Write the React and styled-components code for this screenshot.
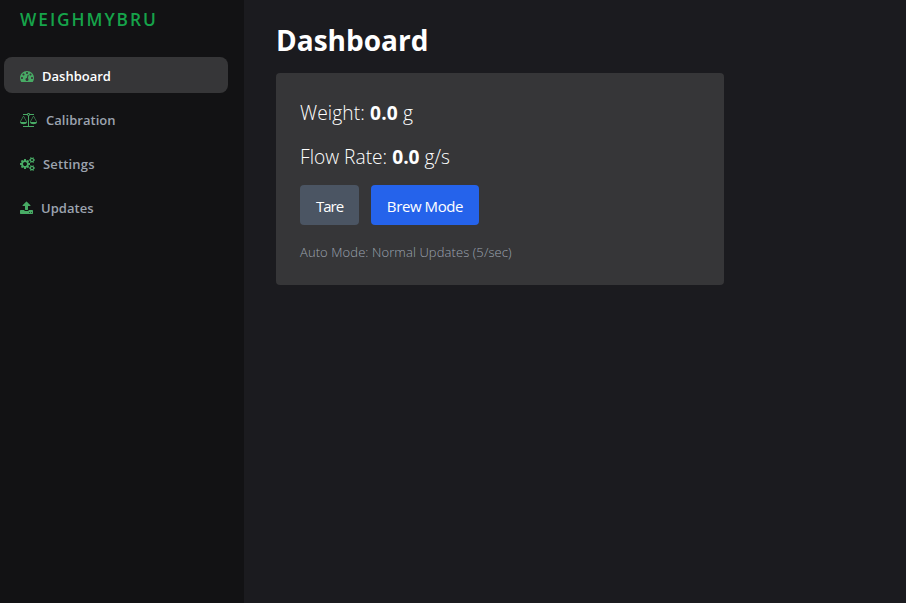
import React from "react";
import styled, { createGlobalStyle } from "styled-components";

const GlobalStyle = createGlobalStyle`
  * { box-sizing: border-box; }
  body {
    margin: 0;
    background: #1b1b1f;
    color: #fff;
    font-family: "Segoe UI", "Open Sans", "Noto Sans", sans-serif;
  }
`;

const Layout = styled.div`
  display: flex;
  min-height: 100vh;
`;

const Sidebar = styled.aside`
  width: 244px;
  flex-shrink: 0;
  padding: 4px 16px 0 4px;
  background: #121214;
`;

const Brand = styled.div`
  padding-left: 16px;
  height: 32px;
  line-height: 32px;
  font-size: 17.3px;
  font-weight: 600;
  letter-spacing: 1.95px;
  white-space: nowrap;
  color: #16a34a;
`;

const Nav = styled.nav`
  display: flex;
  flex-direction: column;
  gap: 8px;
  margin-top: 21px;
`;

const NavItem = styled.a`
  display: flex;
  align-items: center;
  gap: ${(p) => p.$gap}px;
  height: 36px;
  padding: 2px 16px 0;
  border-radius: 8px;
  background: ${(p) => (p.$active ? "#363638" : "transparent")};
  color: ${(p) => (p.$active ? "#fff" : "#9ca3af")};
  font-size: 13px;
  font-weight: 600;
  letter-spacing: ${(p) => p.$spacing}px;
`;

const Glyph = styled.svg`
  width: ${(p) => p.$width}px;
  height: 14px;
  flex-shrink: 0;
  fill: #48ab65;
`;

const Main = styled.main`
  flex: 1;
  padding: 20px 32px;
`;

const Title = styled.h1`
  margin: 0;
  height: 53px;
  line-height: 40px;
  font-size: 28px;
  font-weight: 700;
  white-space: nowrap;
`;

const Card = styled.section`
  width: 448px;
  height: 212px;
  padding: 24px;
  border-radius: 4px;
  background: #363638;
`;

const Reading = styled.p`
  margin: 0 0 12px;
  height: 32px;
  line-height: 31px;
  font-size: 19.2px;
  font-weight: 300;
  letter-spacing: ${(p) => p.$spacing}px;
  white-space: nowrap;

  strong { font-weight: 700; }
`;

const Actions = styled.div`
  display: flex;
  gap: 12px;
`;

const Button = styled.button`
  width: ${(p) => p.$width}px;
  height: 40px;
  padding: 2px 0 0;
  border: 0;
  border-radius: 4px;
  background: ${(p) => (p.$primary ? "#2563eb" : "#4b5563")};
  color: #fff;
  font: 400 15px "Segoe UI", "Open Sans", "Noto Sans", sans-serif;
  letter-spacing: ${(p) => (p.$primary ? -0.4 : -1)}px;
  white-space: nowrap;
`;

const Status = styled.p`
  margin: 17px 0 0;
  line-height: 20px;
  font-size: 13px;
  font-weight: 300;
  letter-spacing: 0.09px;
  color: #9ca3af;
  white-space: nowrap;
`;

const gaugePath =
  "M384 1152q0-53-37.5-90.5t-90.5-37.5-90.5 37.5-37.5 90.5 37.5 90.5 90.5 37.5 90.5-37.5 37.5-90.5zm192-448q0-53-37.5-90.5t-90.5-37.5-90.5 37.5-37.5 90.5 37.5 90.5 90.5 37.5 90.5-37.5 37.5-90.5zm428 481l101-382q6-26-7.5-48.5t-38.5-29.5-48 6.5-30 39.5l-101 382q-60 5-107 43.5t-63 98.5q-20 77 20 146t117 89 146-20 89-117q16-60-6-117t-72-91zm660-33q0-53-37.5-90.5t-90.5-37.5-90.5 37.5-37.5 90.5 37.5 90.5 90.5 37.5 90.5-37.5 37.5-90.5zm-640-640q0-53-37.5-90.5t-90.5-37.5-90.5 37.5-37.5 90.5 37.5 90.5 90.5 37.5 90.5-37.5 37.5-90.5zm448 192q0-53-37.5-90.5t-90.5-37.5-90.5 37.5-37.5 90.5 37.5 90.5 90.5 37.5 90.5-37.5 37.5-90.5zm320 448q0 261-141 483-19 29-54 29h-1402q-35 0-54-29-141-221-141-483 0-182 71-348t191-286 286-191 348-71 348 71 286 191 191 286 71 348z";
const scalePath =
  "M1728 448l-384 704h768zm-1280 0l-384 704h768zm821-192q-14 40-45.5 71.5t-71.5 45.5v1291h608q14 0 23 9t9 23v64q0 14-9 23t-23 9h-1344q-14 0-23-9t-9-23v-64q0-14 9-23t23-9h608v-1291q-40-14-71.5-45.5t-45.5-71.5h-491q-14 0-23-9t-9-23v-64q0-14 9-23t23-9h491q21-57 70-92.5t111-35.5 111 35.5 70 92.5h491q14 0 23 9t9 23v64q0 14-9 23t-23 9h-491zm-181 16q33 0 56.5-23.5t23.5-56.5-23.5-56.5-56.5-23.5-56.5 23.5-23.5 56.5 23.5 56.5 56.5 23.5zm1088 880q0 73-46.5 131t-117.5 91-144.5 49.5-139.5 16.5-139.5-16.5-144.5-49.5-117.5-91-46.5-131q0-11 35-81t92-174.5 107-195.5 102-184 56-100q18-33 56-33t56 33q4 7 56 100t102 184 107 195.5 92 174.5 35 81zm-1280 0q0 73-46.5 131t-117.5 91-144.5 49.5-139.5 16.5-139.5-16.5-144.5-49.5-117.5-91-46.5-131q0-11 35-81t92-174.5 107-195.5 102-184 56-100q18-33 56-33t56 33q4 7 56 100t102 184 107 195.5 92 174.5 35 81z";
const cogsPath =
  "M896 896q0-106-75-181t-181-75-181 75-75 181 75 181 181 75 181-75 75-181zm768 512q0-52-38-90t-90-38-90 38-38 90q0 53 37.5 90.5t90.5 37.5 90.5-37.5 37.5-90.5zm0-1024q0-52-38-90t-90-38-90 38-38 90q0 53 37.5 90.5t90.5 37.5 90.5-37.5 37.5-90.5zm-384 421v185q0 10-7 19.5t-16 10.5l-155 24q-11 35-32 76 34 48 90 115 7 10 7 20 0 12-7 19-23 30-82.5 89.5t-78.5 59.5q-11 0-21-7l-115-90q-37 19-77 31-11 108-23 155-7 24-30 24h-186q-11 0-20-7.5t-10-17.5l-23-153q-34-10-75-31l-118 89q-7 7-20 7-11 0-21-8-144-133-144-160 0-9 7-19 10-14 41-53t47-61q-23-44-35-82l-152-24q-10-1-17-9.5t-7-19.5v-185q0-10 7-19.5t16-10.5l155-24q11-35 32-76-34-48-90-115-7-11-7-20 0-12 7-20 22-30 82-89t79-59q11 0 21 7l115 90q34-18 77-32 11-108 23-154 7-24 30-24h186q11 0 20 7.5t10 17.5l23 153q34 10 75 31l118-89q8-7 20-7 11 0 21 8 144 133 144 160 0 9-7 19-12 16-42 54t-45 60q23 48 34 82l152 23q10 2 17 10.5t7 19.5zm640 533v140q0 16-149 31-12 27-30 52 51 113 51 138 0 4-4 7-122 71-124 71-8 0-46-47t-52-68q-20 2-30 2t-30-2q-14 21-52 68t-46 47q-2 0-124-71-4-3-4-7 0-25 51-138-18-25-30-52-149-15-149-31v-140q0-16 149-31 13-29 30-52-51-113-51-138 0-4 4-7 4-2 35-20t59-34 30-16q8 0 46 46.5t52 67.5q20-2 30-2t30 2q51-71 92-112l6-2q4 0 124 70 4 3 4 7 0 25-51 138 17 23 30 52 149 15 149 31zm0-1024v140q0 16-149 31-12 27-30 52 51 113 51 138 0 4-4 7-122 71-124 71-8 0-46-47t-52-68q-20 2-30 2t-30-2q-14 21-52 68t-46 47q-2 0-124-71-4-3-4-7 0-25 51-138-18-25-30-52-149-15-149-31v-140q0-16 149-31 13-29 30-52-51-113-51-138 0-4 4-7 4-2 35-20t59-34 30-16q8 0 46 46.5t52 67.5q20-2 30-2t30 2q51-71 92-112l6-2q4 0 124 70 4 3 4 7 0 25-51 138 17 23 30 52 149 15 149 31z";
const uploadPath =
  "M1280 1472q0-26-19-45t-45-19-45 19-19 45 19 45 45 19 45-19 19-45zm256 0q0-26-19-45t-45-19-45 19-19 45 19 45 45 19 45-19 19-45zm128-224v320q0 40-28 68t-68 28h-1472q-40 0-68-28t-28-68v-320q0-40 28-68t68-28h427q21 56 70.5 92t110.5 36h256q61 0 110.5-36t70.5-92h427q40 0 68 28t28 68zm-325-648q-17 40-59 40h-256v448q0 26-19 45t-45 19h-256q-26 0-45-19t-19-45v-448h-256q-42 0-59-40-17-39 14-69l448-448q18-19 45-19t45 19l448 448q31 30 14 69z";

const links = [
  { label: "Dashboard", path: gaugePath, units: 1792, gap: 8, spacing: 0, active: true },
  { label: "Calibration", path: scalePath, units: 2176, gap: 9, spacing: 0.03 },
  { label: "Settings", path: cogsPath, units: 1920, gap: 8, spacing: 0.16 },
  { label: "Updates", path: uploadPath, units: 1664, gap: 8, spacing: 0.06 },
];

export default function App() {
  return (
    <Layout>
      <GlobalStyle />
      <Sidebar>
        <Brand>WEIGHMYBRU</Brand>
        <Nav>
          {links.map(({ label, path, units, gap, spacing, active }) => (
            <NavItem key={label} $active={active} $gap={gap} $spacing={spacing}>
              <Glyph viewBox={`0 0 ${units} 1792`} $width={units / 128} aria-hidden="true">
                <path d={path} />
              </Glyph>
              <span>{label}</span>
            </NavItem>
          ))}
        </Nav>
      </Sidebar>
      <Main>
        <Title>Dashboard</Title>
        <Card>
          <Reading $spacing={0.1}>Weight: <strong>0.0</strong> g</Reading>
          <Reading $spacing={0}>Flow Rate: <strong>0.0</strong> g/s</Reading>
          <Actions>
            <Button $width={59}>Tare</Button>
            <Button $width={108} $primary>Brew Mode</Button>
          </Actions>
          <Status>Auto Mode: Normal Updates (5/sec)</Status>
        </Card>
      </Main>
    </Layout>
  );
}
